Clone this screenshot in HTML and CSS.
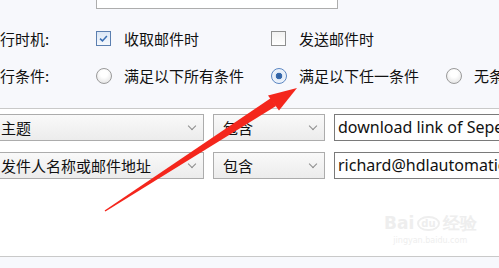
FILE: index.html
```html
<!DOCTYPE html>
<html lang="en">
<head>
    <meta charset="UTF-8">
    <meta name="viewport" content="width=device-width, initial-scale=1.0">
    <title>规则条件</title>
    <link rel="stylesheet" href="styles.css">
</head>
<body>
    <div class="page">
        <div class="topbox"><span class="topbox-text">自动回复</span></div>

        <div class="options">
            <div class="row">
                <div class="label">执行时机:</div>
                <label class="opt"><span class="check checked"><svg viewBox="0 0 15 15"><path d="M3.5 7.6 L6.3 10.3 L11.4 4.6" fill="none" stroke="#3a6fb4" stroke-width="1.8"/></svg></span>收取邮件时</label>
                <label class="opt"><span class="check"></span>发送邮件时</label>
            </div>
            <div class="row">
                <div class="label">执行条件:</div>
                <label class="opt"><span class="radio"></span>满足以下所有条件</label>
                <label class="opt"><span class="radio checked"></span>满足以下任一条件</label>
                <label class="opt"><span class="radio"></span>无条件</label>
            </div>
        </div>

        <div class="rules">
            <div class="rule">
                <div class="select field">主题<span class="chev"></span></div>
                <div class="select op">包含<span class="chev"></span></div>
                <div class="value">download link of Sepetember</div>
            </div>
            <div class="rule">
                <div class="select field">发件人名称或邮件地址<span class="chev"></span></div>
                <div class="select op">包含<span class="chev"></span></div>
                <div class="value">richard@hdlautomation.com</div>
            </div>
        </div>

        <div class="watermark">
            <div class="wm-logo">Bai<span class="wm-paw">du</span>经验</div>
            <div class="wm-url">jingyan.baidu.com</div>
        </div>

        <!-- annotation arrow -->
        <svg class="arrow" width="499" height="268" viewBox="0 0 499 268">
            <polygon points="104.6,210.4 105.4,211.6 276,106 271,98" fill="#f4261c"/>
            <polygon points="297,88 268,95.5 279,110.5" fill="#f4261c"/>
        </svg>
    </div>
</body>
</html>
```

FILE: styles.css
```css
body {
    margin: 0;
    font-family: "Noto Sans CJK SC", "Noto Sans", sans-serif;
    font-size: 15px;
    color: #111;
}

.page {
    position: relative;
    width: 499px;
    height: 268px;
    background: #f7f8fc;
    overflow: hidden;
}

.topbox {
    box-sizing: border-box;
    margin-left: 96px;
    margin-top: -20px;
    width: 242px;
    height: 29px;
    border: 1px solid #adadad;
    border-top: none;
    background: #fff;
    overflow: hidden;
}

.topbox-text {
    display: block;
    padding-left: 6px;
    line-height: 22px;
    margin-top: -5px;
}

.options {
    padding-top: 11px;
}

.row {
    display: flex;
    align-items: center;
    height: 37px;
}

.label {
    margin-left: -15px;
    width: 111px;
    flex-shrink: 0;
}

.opt {
    display: flex;
    align-items: center;
    width: 175px;
    flex-shrink: 0;
    white-space: nowrap;
}

.check {
    box-sizing: border-box;
    width: 15px;
    height: 15px;
    margin-right: 13px;
    border: 1px solid #8e8f8f;
    background: linear-gradient(#f1f1f1, #ffffff);
}

.check.checked {
    border-color: #5b7fb0;
    background: linear-gradient(#dbe7f6, #f6f9fd);
}

.check svg {
    display: block;
    width: 13px;
    height: 13px;
}

.radio {
    box-sizing: border-box;
    width: 16px;
    height: 16px;
    margin-right: 12px;
    border-radius: 50%;
    border: 1px solid #9a9a9a;
    background: radial-gradient(circle at 50% 35%, #ffffff 30%, #dcdcdc 100%);
}

.radio.checked {
    border-color: #5b86c2;
    background: radial-gradient(circle, #2d5c9c 0, #3a6db0 3px, #e3ecf8 3.6px, #f8fbff 100%);
}

.rules {
    box-sizing: border-box;
    margin-top: 14px;
    height: 149px;
    padding-top: 5px;
    background: #fff;
    border-top: 1px solid #c9c9c9;
    border-bottom: 1px solid #c9c9c9;
}

.rule {
    display: flex;
    align-items: center;
    gap: 9px;
    margin-bottom: 11px;
}

.select {
    position: relative;
    box-sizing: border-box;
    height: 27px;
    line-height: 25px;
    border: 1px solid #acacac;
    background: linear-gradient(#f9f9f9, #ececec);
    padding-left: 9px;
    flex-shrink: 0;
}

.select.field {
    margin-left: -10px;
    width: 214px;
    padding-left: 10px;
}

.select.op {
    width: 112px;
}

.chev {
    position: absolute;
    right: 8px;
    top: 8px;
    width: 5px;
    height: 5px;
    border-right: 1.5px solid #8c8c8c;
    border-bottom: 1.5px solid #8c8c8c;
    transform: rotate(45deg);
}

.value {
    box-sizing: border-box;
    height: 27px;
    line-height: 25px;
    flex: 1;
    min-width: 0;
    border: 1px solid #7a7a7a;
    background: #fff;
    padding-left: 3px;
    font-family: "Noto Sans", sans-serif;
    font-size: 16px;
    white-space: nowrap;
    overflow: hidden;
    margin-right: -60px;
}

.watermark {
    position: absolute;
    left: 384px;
    top: 212px;
    color: #eeeeee;
    text-align: center;
    white-space: nowrap;
}

.wm-logo {
    font-family: "DejaVu Sans", sans-serif;
    font-size: 17px;
    font-weight: bold;
    line-height: 22px;
}

.wm-paw {
    font-size: 10px;
    border: 2px solid #eeeeee;
    border-radius: 50%;
    padding: 0 2px;
    margin: 0 3px;
    vertical-align: 2px;
}

.wm-url {
    font-family: "DejaVu Sans", sans-serif;
    font-size: 8px;
    line-height: 12px;
}

.arrow {
    position: absolute;
    left: 0;
    top: 0;
    pointer-events: none;
}
```
